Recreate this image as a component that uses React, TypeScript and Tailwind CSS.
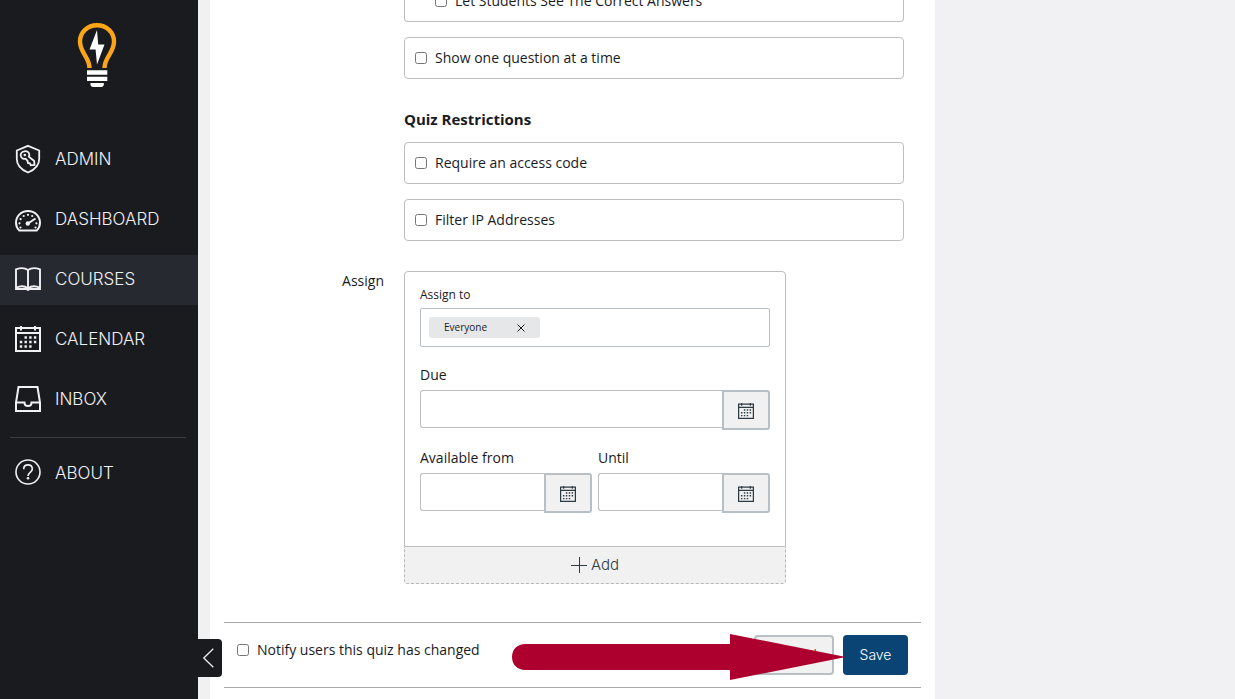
import type { ReactNode } from "react";

type NavItem = {
  label: string;
  icon: ReactNode;
  active?: boolean;
};

const mainNav: NavItem[] = [
  { label: "ADMIN", icon: <ShieldKeyIcon /> },
  { label: "DASHBOARD", icon: <GaugeIcon /> },
  { label: "COURSES", icon: <BookIcon />, active: true },
  { label: "CALENDAR", icon: <CalendarIcon className="size-[26px]" /> },
  { label: "INBOX", icon: <InboxIcon /> },
];

export default function App() {
  return (
    <div className="flex min-h-screen overflow-hidden bg-[#f1f1f4] font-['Open_Sans',sans-serif] text-sm text-[#1a1b1f]">
      <Sidebar />
      <main className="ml-3 min-w-0 flex-1 bg-white px-3.5">
        <QuizForm />
        <FormFooter />
      </main>
      <aside className="w-[300px] shrink-0" />
    </div>
  );
}

function Sidebar() {
  return (
    <nav className="w-[198px] shrink-0 bg-[#1a1b1f] font-['Inter',sans-serif] text-[#f1f1f4]">
      <a href="#home" aria-label="Home" className="flex justify-center pt-[22px] pr-1">
        <LogoIcon />
      </a>
      <ul className="mt-[47px] space-y-2.5">
        {mainNav.map((item) => (
          <NavLink key={item.label} {...item} />
        ))}
      </ul>
      <hr className="mt-3 mr-3 ml-2.5 border-[#3b3c42]" />
      <ul className="mt-[11px]">
        <NavLink label="ABOUT" icon={<HelpIcon />} />
      </ul>
      <button
        type="button"
        aria-label="Collapse menu"
        className="fixed bottom-[22px] left-[198px] flex h-[38px] w-6 items-center rounded-r bg-[#1a1b1f] pl-1"
      >
        <svg viewBox="0 0 12 20" className="h-5 w-3" fill="none" stroke="currentColor" strokeWidth="1.3">
          <path d="M11.3 0.8 1.8 10l9.5 9.2" />
        </svg>
      </button>
    </nav>
  );
}

function NavLink({ label, icon, active }: NavItem) {
  return (
    <li>
      <a
        href={`#${label.toLowerCase()}`}
        className={[
          "flex h-[50px] items-center gap-3.5 pb-0.5 pl-[15px] text-[17px] font-light",
          active ? "bg-[#272930]" : "",
        ].join(" ")}
      >
        <span className="flex w-[26px] justify-center">{icon}</span>
        {label}
      </a>
    </li>
  );
}

function QuizForm() {
  return (
    <form className="grid grid-cols-[160px_minmax(0,1fr)] gap-x-5 pr-[17px]">
      <div className="col-start-2 -mt-5">
        <OptionBox id="see-answers" label="Let Students See The Correct Answers" nested />
        <OptionBox id="one-question" label="Show one question at a time" />
        <h2 className="mt-[30px] -mb-1 pb-0.5 text-[15px] leading-5 font-bold">Quiz Restrictions</h2>
        <OptionBox id="access-code" label="Require an access code" />
        <OptionBox id="filter-ip" label="Filter IP Addresses" />
      </div>

      <div className="mt-[30px] text-right leading-5">Assign</div>
      <div className="mt-[30px] max-w-[382px]">
        <AssignCard />
        <button
          type="button"
          className="flex h-[37px] w-full items-center justify-center gap-1 rounded-b border border-t-0 border-dashed border-[#b5b7ba] bg-[#f1f1f1] font-['Inter',sans-serif] text-[15px] font-light text-[#2d3b45]"
        >
          <svg viewBox="0 0 16 16" className="size-4" fill="none" stroke="currentColor" strokeWidth="1">
            <path d="M8.5 0v16M0 8.5h16" />
          </svg>
          Add
        </button>
      </div>
    </form>
  );
}

function OptionBox({ id, label, nested }: { id: string; label: string; nested?: boolean }) {
  return (
    <div
      className={[
        "flex h-[42px] items-center rounded border border-[#bcbec0]",
        nested ? "rounded-t-none border-t-0 pl-[30px]" : "mt-[15px] pl-2.5",
      ].join(" ")}
    >
      <input id={id} type="checkbox" className="size-3" />
      <label htmlFor={id} className="pl-2">
        {label}
      </label>
    </div>
  );
}

function AssignCard() {
  return (
    <div className="rounded-t border border-[#bcbec0] px-[15px] pt-[15px] pb-[33px]">
      <label htmlFor="assign-to" className="block text-xs leading-4">
        Assign to
      </label>
      <div className="mt-[5px] flex h-[39px] items-center rounded-xs border border-[#b8c0c6] px-2">
        <button
          type="button"
          aria-label="Remove Everyone"
          className="flex h-[21px] w-[111px] items-center justify-between rounded-[3px] bg-[#e6e7e9] px-[15px] text-[10px]"
        >
          Everyone
          <svg viewBox="0 0 8 8" className="size-2" fill="none" stroke="currentColor" strokeWidth="1">
            <path d="m0.5 0.5 7 7M7.5 0.5l-7 7" />
          </svg>
        </button>
        <input id="assign-to" type="text" className="ml-2 min-w-0 flex-1 outline-none" />
      </div>

      <div className="mt-[18px]">
        <DateField id="due" label="Due" />
      </div>
      <div className="mt-[18px] grid grid-cols-2 gap-1.5">
        <DateField id="available-from" label="Available from" />
        <DateField id="until" label="Until" />
      </div>
    </div>
  );
}

function DateField({ id, label }: { id: string; label: string }) {
  return (
    <div>
      <label htmlFor={id} className="block leading-5">
        {label}
      </label>
      <div className="mt-[5px] flex items-start">
        <input
          id={id}
          type="text"
          className="h-[38px] min-w-0 flex-1 rounded-l-[3px] border border-r-0 border-[#bcbec0] px-2"
        />
        <button
          type="button"
          aria-label={`Pick date: ${label}`}
          className="flex h-10 w-12 shrink-0 items-center justify-center rounded-r-[3px] border-2 border-[#b8c0c6] bg-[#f1f1f1] pt-0.5 text-[#2d3b45]"
        >
          <CalendarIcon className="size-4" />
        </button>
      </div>
    </div>
  );
}

function FormFooter() {
  return (
    <div className="relative mt-[38px] flex h-[66px] items-start border-y border-[#a6a8ae] px-[13px] pt-3">
      <div className="flex h-[30px] items-center">
        <input id="notify" type="checkbox" className="size-3" />
        <label htmlFor="notify" className="pl-2">
          Notify users this quiz has changed
        </label>
      </div>
      <div className="ml-auto flex gap-[9px] font-['Inter',sans-serif] font-light">
        <button type="button" className="h-10 w-20 rounded border-2 border-[#b8c0c6] bg-[#f1f1f1] text-[#2d3b45]">
          Cancel
        </button>
        <button type="button" className="h-10 w-[65px] rounded bg-[#0a4474] text-white">
          Save
        </button>
      </div>
      {/* Pointer to the save button */}
      <svg viewBox="0 0 334 46" className="pointer-events-none absolute top-[11px] right-[75px] h-[46px] w-[334px]" fill="#ae002e">
        <path d="M13 10H218V0L334 23 218 46V36H13C6 36 0 31 0 23S6 10 13 10Z" />
      </svg>
    </div>
  );
}

function LogoIcon() {
  return (
    <svg viewBox="0 0 40 66" className="h-[66px] w-10" fill="none">
      <path
        d="M12.5 46C12.5 35 3 31 3 19.5 3 10 10.5 3.2 20 3.2S37 10 37 19.5C37 31 27.5 35 27.5 46"
        stroke="#fba618"
        strokeWidth="4.4"
      />
      <path d="M20 8 12.5 27.500H18.600L20 42.500 27.500 22.500H21.200Z" fill="#fff" />
      <path d="M10 48.300h20.300v4.400H10zM10 54.800h20.300v4.200H10zM13.500 61h13.300v2q-.5 2-2.500 2h-8.300q-2 0-2.500-2z" fill="#fff" />
    </svg>
  );
}

function ShieldKeyIcon() {
  return (
    <svg viewBox="0 0 26 30" className="h-[30px] w-[26px]" fill="none" stroke="currentColor" strokeWidth="1.8">
      <path d="M13 1.800 24.200 6.500V15c0 6.500-5 11-11.200 13.500C6.800 26 1.800 21.500 1.800 15V6.500Z" />
      <path d="M9.300 7.300c2.500-.6 4.800.8 5 3.200.1.900-.1 1.500-.4 2.200l5.300 4.300.3 4-3.700.2-1-1.900-1.900-.3-.4-2.300-1.900-1.900c-2.300.6-4.600-1-4.900-3.300-.2-2.100 1.400-3.900 3.600-4.200Z" />
      <circle cx="9.800" cy="11" r="1.300" fill="currentColor" stroke="none" />
    </svg>
  );
}

function GaugeIcon() {
  return (
    <svg viewBox="0 0 26 24" className="mt-1 h-6 w-[26px]" fill="none" stroke="currentColor" strokeWidth="2">
      <path d="M4.300 21.600C2.200 19.600 1 17 1 13.800 1 7 6.300 2 13 2s12 5 12 11.800c0 3.200-1.200 5.800-3.300 7.800Z" />
      <path d="m13 14.500 7.500-5" />
      <circle cx="12.800" cy="14.500" r="2.200" fill="currentColor" stroke="none" />
      <g fill="currentColor" stroke="none">
        <circle cx="4.500" cy="14.300" r="1.100" />
        <circle cx="5.600" cy="10.200" r="1.100" />
        <circle cx="8.700" cy="7" r="1.100" />
        <circle cx="13" cy="5.800" r="1.100" />
        <circle cx="17.200" cy="7" r="1.100" />
        <circle cx="21.400" cy="14.300" r="1.100" />
        <circle cx="5.500" cy="18.500" r="1.100" />
        <circle cx="20.500" cy="18.500" r="1.100" />
      </g>
    </svg>
  );
}

function BookIcon() {
  return (
    <svg viewBox="0 0 26 24" className="h-6 w-[26px]" fill="none" stroke="currentColor" strokeWidth="1.900">
      <path d="M13 3C10 .8 5 .8 1 2.300V22H11.500L13 23l1.500-1H25V2.300C21 .8 16 .8 13 3ZV22.500" />
      <path d="M1 20.800C5 19 10 19 13 21.500 16 19 21 19 25 20.800" />
    </svg>
  );
}

function CalendarIcon({ className }: { className: string }) {
  return (
    <svg viewBox="0 0 26 26" className={className} fill="none" stroke="currentColor" strokeWidth="2">
      <path d="M1 2h24v23H1ZM1 7h24M6 0v4.500M20 0v4.500" />
      <g fill="currentColor" stroke="none">
        <path d="M9.500 10.300h2.400v2.400H9.500zM14.200 10.300h2.400v2.400h-2.400zM18.900 10.300h2.400v2.400h-2.400z" />
        <path d="M4.800 14.800h2.400v2.400H4.800zM9.500 14.800h2.400v2.400H9.500zM14.200 14.800h2.400v2.400h-2.400zM18.900 14.800h2.400v2.400h-2.400z" />
        <path d="M4.800 19.300h2.400v2.400H4.800zM9.500 19.300h2.400v2.400H9.500zM14.200 19.300h2.400v2.400h-2.400z" />
      </g>
    </svg>
  );
}

function InboxIcon() {
  return (
    <svg viewBox="0 0 26 26" className="size-[26px]" fill="none" stroke="currentColor" strokeWidth="2">
      <path d="M3.500 1h19L25 16.500V25H1v-8.500Z" />
      <path d="M1 16.500h8.500c0 2 1.500 3.500 3.500 3.500s3.500-1.500 3.500-3.500H25" />
    </svg>
  );
}

function HelpIcon() {
  return (
    <svg viewBox="0 0 26 26" className="-mt-0.5 -ml-px size-[26px]" fill="none" stroke="currentColor" strokeWidth="1.600">
      <circle cx="13" cy="13" r="12" />
      <path d="M8.700 10.200c0-2.700 1.700-4.300 4.200-4.300s4.400 1.500 4.400 4c0 3.500-4.200 3.300-4.200 7" />
      <circle cx="13" cy="19.200" r="1.300" fill="currentColor" stroke="none" />
    </svg>
  );
}
